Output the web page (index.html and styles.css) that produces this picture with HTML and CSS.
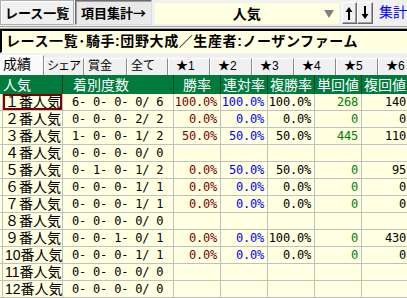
FILE: index.html
```html
<!DOCTYPE html>
<html lang="ja">
<head>
    <meta charset="UTF-8">
    <title>項目集計</title>
    <link rel="stylesheet" href="styles.css">
</head>
<body>
    <div class="toolbar">
        <button type="button" class="btn">レース一覧</button>
        <button type="button" class="btn on">項目集計→</button>
        <div class="combo"><span>人気</span><span class="drop"></span></div>
        <button type="button" class="arrow"><svg width="8" height="14" viewBox="0 0 8 14"><path d="M4 1 L0.5 6 H3 V14 H5 V6 H7.5 Z" fill="#000"/></svg></button>
        <button type="button" class="arrow"><svg width="8" height="14" viewBox="0 0 8 14"><path d="M4 13 L0.5 8 H3 V0 H5 V8 H7.5 Z" fill="#000"/></svg></button>
        <span class="link">集計</span>
    </div>
    <div class="title">レース一覧･騎手:団野大成／生産者:ノーザンファーム</div>
    <div class="tabs">
        <div class="tab on w44">成績</div>
        <div class="tab w40">シェア</div>
        <div class="tab w43">賞金</div>
        <div class="tab w41">全て</div>
        <div class="tab star">★1</div>
        <div class="tab star">★2</div>
        <div class="tab star">★3</div>
        <div class="tab star">★4</div>
        <div class="tab star">★5</div>
        <div class="tab star">★6</div>
    </div>
    <table class="grid">
        <thead>
            <tr>
                <th class="c-pop">人気</th>
                <th class="c-cnt">着別度数</th>
                <th class="c-num">勝率</th>
                <th class="c-num">連対率</th>
                <th class="c-num">複勝率</th>
                <th class="c-num">単回値</th>
                <th class="c-last">複回値</th>
            </tr>
        </thead>
        <tbody>
            <tr><td class="pop sel"><span class="selbox">１番人気</span></td><td class="cnt">6- 0- 0- 0/ 6</td><td class="win">100.0%</td><td class="ren">100.0%</td><td class="fuku">100.0%</td><td class="tan">268</td><td class="fk">140</td></tr>
            <tr><td class="pop">２番人気</td><td class="cnt">0- 0- 0- 2/ 2</td><td class="win">0.0%</td><td class="ren">0.0%</td><td class="fuku">0.0%</td><td class="tan">0</td><td class="fk">0</td></tr>
            <tr><td class="pop">３番人気</td><td class="cnt">1- 0- 0- 1/ 2</td><td class="win">50.0%</td><td class="ren">50.0%</td><td class="fuku">50.0%</td><td class="tan">445</td><td class="fk">110</td></tr>
            <tr><td class="pop">４番人気</td><td class="cnt">0- 0- 0- 0/ 0</td><td></td><td></td><td></td><td></td><td></td></tr>
            <tr><td class="pop">５番人気</td><td class="cnt">0- 1- 0- 1/ 2</td><td class="win">0.0%</td><td class="ren">50.0%</td><td class="fuku">50.0%</td><td class="tan">0</td><td class="fk">95</td></tr>
            <tr><td class="pop">６番人気</td><td class="cnt">0- 0- 0- 1/ 1</td><td class="win">0.0%</td><td class="ren">0.0%</td><td class="fuku">0.0%</td><td class="tan">0</td><td class="fk">0</td></tr>
            <tr><td class="pop">７番人気</td><td class="cnt">0- 0- 0- 1/ 1</td><td class="win">0.0%</td><td class="ren">0.0%</td><td class="fuku">0.0%</td><td class="tan">0</td><td class="fk">0</td></tr>
            <tr><td class="pop">８番人気</td><td class="cnt">0- 0- 0- 0/ 0</td><td></td><td></td><td></td><td></td><td></td></tr>
            <tr><td class="pop">９番人気</td><td class="cnt">0- 0- 1- 0/ 1</td><td class="win">0.0%</td><td class="ren">0.0%</td><td class="fuku">100.0%</td><td class="tan">0</td><td class="fk">430</td></tr>
            <tr><td class="pop">10番人気</td><td class="cnt">0- 0- 0- 1/ 1</td><td class="win">0.0%</td><td class="ren">0.0%</td><td class="fuku">0.0%</td><td class="tan">0</td><td class="fk">0</td></tr>
            <tr><td class="pop">11番人気</td><td class="cnt">0- 0- 0- 0/ 0</td><td></td><td></td><td></td><td></td><td></td></tr>
            <tr><td class="pop">12番人気</td><td class="cnt">0- 0- 0- 0/ 0</td><td></td><td></td><td></td><td></td><td></td></tr>
        </tbody>
    </table>
</body>
</html>
```

FILE: styles.css
```css
body {
    margin: 0;
    width: 407px;
    height: 298px;
    overflow: hidden;
    font-family: "Liberation Sans", "Noto Sans CJK JP", sans-serif;
    background-color: #f0f0f0;
    color: #000;
}
.toolbar {
    display: flex;
    align-items: flex-start;
    height: 26px;
    border-bottom: 1px solid #a0a0a0;
}
.btn {
    width: 76px;
    height: 25px;
    margin: 0;
    padding: 0;
    font-family: "Noto Sans CJK JP", sans-serif;
    font-size: 13px;
    font-weight: bold;
    line-height: 21px;
    color: #000;
    background-color: #f0f0f0;
    border: 1px solid #adadad;
    box-shadow: inset 1px 1px #fff;
}
.btn.on {
    width: 78px;
    margin-left: 1px;
    background-color: #e9e9e9;
    border-color: #6d6d6d #dcdcdc #dcdcdc #6d6d6d;
    box-shadow: inset 1px 1px #a0a0a0;
}
.combo {
    display: flex;
    align-items: center;
    justify-content: center;
    position: relative;
    width: 188px;
    height: 21px;
    margin: 3px 0 0 3px;
    box-sizing: border-box;
    background-color: #ffffe1;
    font-size: 14px;
    font-weight: bold;
    line-height: 16px;
}
.combo .drop {
    position: absolute;
    right: 5px;
    top: 7px;
    border-left: 5px solid transparent;
    border-right: 5px solid transparent;
    border-top: 8px solid #808080;
}
.arrow {
    width: 16px;
    height: 22px;
    margin: 2px 0 0 0;
    padding: 0;
    display: flex;
    align-items: center;
    justify-content: center;
    background-color: #f0f0f0;
    border: 1px solid;
    border-color: #fff #696969 #696969 #fff;
    box-shadow: inset -1px -1px #a0a0a0;
}
.toolbar .combo + .arrow {
    margin-left: 3px;
}
.link {
    margin: 4px 0 0 6px;
    font-size: 14px;
    line-height: 16px;
    color: #0000ff;
    white-space: nowrap;
}
.title {
    margin-top: 2px;
    height: 24px;
    box-sizing: border-box;
    padding-left: 4px;
    background-color: #ffffe1;
    border-top: 2px solid #000;
    border-left: 2px solid #000;
    border-bottom: 1px solid #fff;
    box-shadow: 0 -1px #a0a0a0;
    font-size: 14px;
    font-weight: bold;
    letter-spacing: 0.6px;
    line-height: 20px;
    white-space: nowrap;
    overflow: hidden;
}
.tabs {
    display: flex;
    align-items: flex-end;
    height: 20px;
    margin-top: 2px;
    overflow: hidden;
}
.tab {
    flex: none;
    width: 42px;
    height: 17px;
    box-sizing: border-box;
    padding-left: 3px;
    background-color: #f0f0f0;
    border-top: 1px solid #fff;
    border-left: 1px solid #fff;
    border-right: 1px solid #8a8a8a;
    font-size: 12px;
    line-height: 15px;
    white-space: nowrap;
}
.tab.on {
    height: 20px;
    padding-left: 2px;
    background-color: #fafafa;
    font-size: 14px;
    line-height: 17px;
}
.tab.star {
    padding-left: 7px;
}
.tab:last-child {
    width: 29px;
    border-right: none;
}
.w40 {
    width: 40px;
    padding-left: 2px;
    letter-spacing: -1px;
}
.w41 { width: 41px; }
.w43 { width: 43px; }
.w44 { width: 44px; }
.grid {
    border-collapse: separate;
    border-spacing: 0;
    table-layout: fixed;
    width: 407px;
    font-size: 14px;
}
.grid th,
.grid td {
    box-sizing: border-box;
    padding: 0;
    white-space: pre;
}
.grid th {
    height: 19px;
    background-color: #007a3d;
    color: #fff;
    font-weight: normal;
    line-height: 18px;
    text-align: center;
    border-right: 1px solid #143c28;
}
.grid th.c-pop {
    width: 63px;
    text-align: left;
    padding-left: 3px;
}
.grid th.c-cnt {
    width: 111px;
    text-align: left;
    padding-left: 10px;
}
.grid th.c-num {
    width: 47px;
}
.grid th.c-last {
    width: 45px;
    text-align: left;
    padding-left: 2px;
    border-right: none;
}
.grid td {
    height: 17px;
    line-height: 16px;
    background-color: #ffffe1;
    border-right: 1px solid #c0c0c0;
    border-bottom: 1px solid #c0c0c0;
    text-align: right;
    padding-right: 3px;
    font-family: "DejaVu Sans Mono", monospace;
    font-size: 12px;
    letter-spacing: -0.2px;
}
.grid td.pop {
    font-family: "Liberation Sans", "Noto Sans CJK JP", sans-serif;
    font-size: 14px;
    letter-spacing: 0;
    text-align: left;
    padding: 0 0 0 5px;
    background-image: linear-gradient(to right, transparent 2px, #c0c0c0 2px, #c0c0c0 3px, transparent 3px);
}
.grid td.sel {
    padding: 0;
}
.selbox {
    display: block;
    height: 16px;
    margin-left: 3px;
    box-sizing: border-box;
    padding-left: 0;
    border: 2px solid #800000;
    line-height: 12px;
}
.grid td.cnt {
    text-align: left;
    padding-left: 9px;
}
.grid td:last-child {
    border-right: none;
    padding-right: 1px;
}
.win { color: #800000; }
.ren { color: #0000ff; }
.fuku { color: #000; }
.tan { color: #008000; }
.fk { color: #000; }
```
